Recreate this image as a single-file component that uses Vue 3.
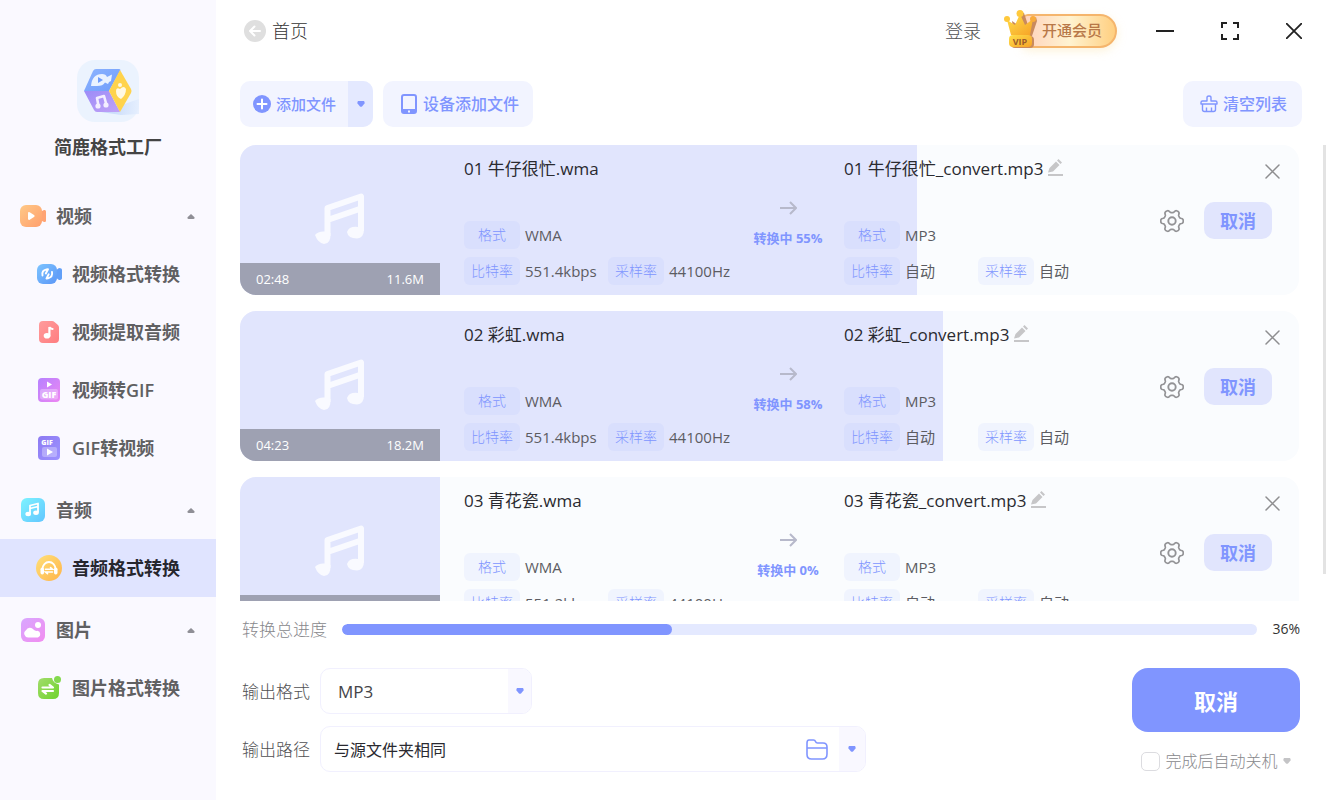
<template>
  <div class="app">
    <aside class="sidebar">
      <div class="brand">
        <svg class="brand-logo" viewBox="0 0 62 62" aria-hidden="true">
          <defs>
            <linearGradient id="cubeTop" x1="0" y1="0" x2="1" y2="1">
              <stop offset="0" stop-color="#8db4ff" />
              <stop offset="1" stop-color="#6f9cfb" />
            </linearGradient>
            <linearGradient id="cubeLeft" x1="0" y1="0" x2="1" y2="1">
              <stop offset="0" stop-color="#9c8cf8" />
              <stop offset="1" stop-color="#c0a2f6" />
            </linearGradient>
            <linearGradient id="cubeShadow" x1="0" y1="0" x2="1" y2="0">
              <stop offset="0" stop-color="#b4cdf8" />
              <stop offset="1" stop-color="#e4eefe" />
            </linearGradient>
          </defs>
          <rect width="62" height="62" rx="18" fill="#ebf3fe" />
          <path d="M24 52L62 39V54L44 55Z" fill="url(#cubeShadow)" opacity=".8" />
          <path d="M19 9H42Q44 9 43 11L32 31H7L16 11Q17 9 19 9Z" fill="url(#cubeTop)" />
          <path d="M7 31H32L43 52H20Q18 52 17 50Z" fill="url(#cubeLeft)" />
          <path d="M43 10L54 29Q55 31 54 33L43 52L32 31Z" fill="#ffd34c" />
          <path d="M14 26Q15 14 25 14Q29 14 30 17L35 14.500L34 21L32 22L31 24L28 22.500Q26 26 20 26H14Z" fill="#eaf2ff" />
          <path d="M21 17L26 20L21 23Z" fill="#6f9cfb" />
          <path d="M21.500 46L20 38L27 36L29.500 45" fill="none" stroke="#f3eeff" stroke-width="2.600" stroke-linejoin="round" />
          <circle cx="21" cy="46" r="2.600" fill="#f3eeff" />
          <circle cx="29" cy="45" r="2.600" fill="#f3eeff" />
          <path d="M39 31Q39 27 43 29Q47 25 49 29Q49 35 44 39Q39 37 39 31Z" fill="#fff8e2" />
          <circle cx="43" cy="25" r="2" fill="#fff8e2" />
        </svg>
        <h1 class="brand-name">简鹿格式工厂</h1>
      </div>

      <nav class="menu">
        <div v-for="group in menu" :key="group.label" class="menu-group">
          <button type="button" class="menu-header" @click="group.open = !group.open">
            <svg class="menu-icon" viewBox="0 0 26 26" aria-hidden="true">
              <template v-if="group.icon === 'video'">
                <path d="M20 9L24 7Q26 6.500 26 8.500V17.500Q26 19.500 24 19L20 17Z" fill="#ffa474" />
                <rect y="2" width="22" height="22" rx="6" fill="url(#gOrange)" />
                <path d="M8 10.500Q8 8.500 9.700 9.300L14 12Q15.500 13 14 14L9.700 16.700Q8 17.500 8 15.500Z" fill="#fff" />
              </template>
              <template v-else-if="group.icon === 'audio'">
                <rect x="1" y="1" width="24" height="24" rx="6" fill="url(#gCyan)" />
                <path d="M10 17V8.500L18 6.500V15.500M10 11.500L18 9.500" fill="none" stroke="#fff" stroke-width="1.800" stroke-linejoin="round" />
                <ellipse cx="8.200" cy="17" rx="2.800" ry="2.200" fill="#fff" />
                <ellipse cx="16" cy="15.800" rx="2.800" ry="2.200" fill="#fff" />
              </template>
              <template v-else>
                <rect x="1" y="1" width="24" height="24" rx="6" fill="url(#gPink)" />
                <circle cx="18" cy="8" r="3" fill="#fff" />
                <path d="M8.500 20.500A4 4 0 0 1 6 13.200A4.500 4.500 0 0 1 13.500 12.500Q15 14.200 17.500 13.800A3.500 3.500 0 0 1 18 20.500Z" fill="#fff" />
              </template>
            </svg>
            <span>{{ group.label }}</span>
            <svg class="menu-caret" :class="{ closed: !group.open }" viewBox="0 0 8 5" aria-hidden="true">
              <path d="M4 0L7.500 3.200Q8 5 6.500 5H1.500Q0 5 .5 3.200Z" fill="#8f8f96" />
            </svg>
          </button>

          <template v-if="group.open">
            <button
              v-for="item in group.items"
              :key="item.label"
              type="button"
              class="menu-item"
              :class="{ active: item.label === current }"
              @click="current = item.label"
            >
              <svg class="menu-icon" viewBox="0 0 26 26" aria-hidden="true">
                <template v-if="item.icon === 'video-convert'">
                  <path d="M19 10L23 7Q26 7 26 9V17Q26 19 23 19L19 16Z" fill="#62a0f8" />
                  <rect x="1" y="3" width="20" height="20" rx="6" fill="url(#gBlue)" />
                  <path d="M6.500 14.500Q5.500 9.500 10.500 8.500L12 8.300L9.800 12.500M16 11Q17 16 12 17.300L10.500 17.500L12.700 13.300" fill="none" stroke="#fff" stroke-width="1.900" stroke-linecap="round" stroke-linejoin="round" />
                </template>
                <template v-else-if="item.icon === 'extract'">
                  <path d="M7 2H16Q17.500 2 18.500 3L22 6Q23 7 23 8.500V20Q23 24 19 24H7Q3 24 3 20V6Q3 2 7 2Z" fill="url(#gRed)" />
                  <ellipse cx="11" cy="16.800" rx="3.300" ry="2.800" fill="#fff" />
                  <path d="M13.400 17V8Q14 9.800 16.500 10" fill="none" stroke="#fff" stroke-width="2.200" stroke-linecap="round" />
                </template>
                <template v-else-if="item.icon === 'to-gif'">
                  <rect x="2" y="1" width="22" height="24" rx="4" fill="url(#gViolet)" />
                  <path d="M11 4.500L16 7.500L11 10.500Z" fill="#fff" />
                  <rect x="4" y="12" width="18" height="10.500" rx="2" fill="#fff" opacity=".3" />
                  <text x="13" y="21" class="gif-text" font-size="9">GIF</text>
                </template>
                <template v-else-if="item.icon === 'from-gif'">
                  <rect x="2" y="1" width="22" height="24" rx="4" fill="url(#gIndigo)" />
                  <text x="11" y="9.500" class="gif-text" font-size="7">GIF</text>
                  <rect x="6" y="12" width="15" height="10" rx="2" fill="#fff" opacity=".3" />
                  <path d="M11 13.500L17 17L11 20.500Z" fill="#fff" />
                </template>
                <template v-else-if="item.icon === 'audio-convert'">
                  <circle cx="13" cy="13" r="13" fill="url(#gYellow)" />
                  <path d="M6.500 14A6.500 7 0 0 1 19.500 14" fill="none" stroke="#fff" stroke-width="1.800" />
                  <rect x="4.500" y="12.500" width="3.500" height="7" rx="1.700" fill="#fff" />
                  <rect x="18" y="12.500" width="3.500" height="7" rx="1.700" fill="#fff" />
                  <path d="M9.500 14.200H16.500L14.500 12.500M16.500 17H9.500L11.500 18.700" fill="none" stroke="#fff" stroke-width="1.600" stroke-linecap="round" />
                </template>
                <template v-else>
                  <path d="M8 3H16Q17 8 23 9.500V18Q23 24 17 24H8Q2 24 2 18V9Q2 3 8 3Z" fill="url(#gGreen)" />
                  <circle cx="21.500" cy="4.500" r="3.500" fill="#83d94e" />
                  <path d="M6.500 12.500H17L13.500 9.800M17 16H6.500L10 18.700" fill="none" stroke="#fff" stroke-width="2.200" stroke-linecap="round" stroke-linejoin="round" />
                </template>
              </svg>
              <span>{{ item.label }}</span>
            </button>
          </template>
        </div>
      </nav>

      <!-- Shared gradients for the menu icons -->
      <svg class="defs" width="0" height="0" aria-hidden="true">
        <defs>
          <linearGradient v-for="g in gradients" :id="g.id" :key="g.id" x1="0" y1="0" x2="1" y2="1">
            <stop offset="0" :stop-color="g.from" />
            <stop offset="1" :stop-color="g.to" />
          </linearGradient>
        </defs>
      </svg>
    </aside>

    <main class="main">
      <header class="titlebar">
        <button type="button" class="back">
          <svg width="22" height="22" viewBox="0 0 22 22" aria-hidden="true">
            <circle cx="11" cy="11" r="11" fill="#dfdfdf" />
            <path d="M16 11H6.500M10.500 6.500L6 11L10.500 15.500" fill="none" stroke="#fff" stroke-width="2" stroke-linecap="round" stroke-linejoin="round" />
          </svg>
          <span>首页</span>
        </button>

        <div class="titlebar-right">
          <button type="button" class="login">登录</button>
          <button type="button" class="vip">
            <svg class="vip-crown" viewBox="0 0 36 40" aria-hidden="true">
              <path d="M8 12L14 16L17 3L20 4L24 16L32 8L33 12L28 27H10Z" fill="#c98a5c" />
              <path d="M3 11L11 16L16 5L21 16L29 10L26 26H7Z" fill="url(#gCrown)" />
              <circle cx="3" cy="10" r="3" fill="#ffc93c" />
              <circle cx="16" cy="4.500" r="3.500" fill="#ffc93c" />
              <circle cx="29" cy="10" r="3" fill="#f8ab3a" />
              <rect x="7" y="27" width="23" height="12" rx="4" fill="#c98a5c" />
              <rect x="5" y="26" width="23" height="12" rx="4" fill="url(#gCrown)" />
              <text x="16" y="35.500" class="vip-text">VIP</text>
            </svg>
            <span class="vip-label">开通会员</span>
          </button>
          <div class="window-controls">
            <button type="button" aria-label="最小化">
              <svg width="18" height="18" viewBox="0 0 18 18"><path d="M0 9H18" stroke="#222" stroke-width="2" /></svg>
            </button>
            <button type="button" aria-label="最大化">
              <svg width="18" height="18" viewBox="0 0 18 18">
                <path d="M1 6V1H6M12 1H17V6M17 12V17H12M6 17H1V12" fill="none" stroke="#222" stroke-width="2" />
              </svg>
            </button>
            <button type="button" aria-label="关闭">
              <svg width="16" height="16" viewBox="0 0 16 16"><path d="M0 0L16 16M16 0L0 16" stroke="#222" stroke-width="1.800" /></svg>
            </button>
          </div>
        </div>
      </header>

      <div class="toolbar">
        <div class="split">
          <button type="button" class="split-main">
            <svg width="18" height="18" viewBox="0 0 18 18" aria-hidden="true">
              <circle cx="9" cy="9" r="9" fill="#8095ff" />
              <path d="M9 4.500V13.500M4.500 9H13.500" stroke="#fff" stroke-width="2" stroke-linecap="round" />
            </svg>
            <span>添加文件</span>
          </button>
          <button type="button" class="split-caret" aria-label="更多添加方式">
            <svg width="8" height="6" viewBox="0 0 8 6"><path d="M1 0H7Q8 1 7.500 2.500L5 5.500Q4 6 3 5.500L.5 2.500Q0 1 1 0Z" fill="#8095ff" /></svg>
          </button>
        </div>
        <button type="button" class="tool">
          <svg width="16" height="20" viewBox="0 0 16 20" aria-hidden="true">
            <path fill-rule="evenodd" d="M3 0H13Q16 0 16 3V17Q16 20 13 20H3Q0 20 0 17V3Q0 0 3 0ZM2 3Q2 2 3 2H13Q14 2 14 3V15H2ZM7 16.500V18.500H9V16.500Z" fill="#8095ff" />
          </svg>
          <span>设备添加文件</span>
        </button>
        <button type="button" class="tool clear">
          <svg width="18" height="18" viewBox="0 0 18 18" aria-hidden="true">
            <path d="M7 6V2.500Q7 1 9 1Q11 1 11 2.500V6H15.500Q17 6 17 7.500V9H1V7.500Q1 6 2.500 6ZM2.500 9.500V14.500Q2.500 16.500 4.500 16.500H13.500Q15.500 16.500 15.500 14.500V9.500M6.500 16V12.500M11.500 16V12.500" fill="none" stroke="#8095ff" stroke-width="1.400" stroke-linejoin="round" />
          </svg>
          <span>清空列表</span>
        </button>
      </div>

      <div class="list-area">
        <ul class="list">
          <li v-for="file in files" :key="file.name" class="card">
            <div class="thumb">
              <svg class="thumb-note" viewBox="0 0 50 52" aria-hidden="true">
                <path d="M12.500 43V15L46 3.500V38M12.500 27L46 15.500" fill="none" stroke="#f9faff" stroke-width="6" stroke-linejoin="round" />
                <path d="M0 42Q3 38 10 38.500L15.500 40Q16 51 9 51Q3 50 0 42ZM32 39Q34 33 43 34L49 36Q49 45 42 45.500Q33 45.500 32 39Z" fill="#f9faff" />
              </svg>
              <div class="thumb-bar">
                <span>{{ file.duration }}</span>
                <span>{{ file.size }}</span>
              </div>
            </div>

            <div class="card-body">
              <div class="card-fill" :style="{ width: file.progress + '%' }"></div>

              <section class="source">
                <h2 class="file-name">{{ file.name }}.wma</h2>
                <dl class="props">
                  <div class="prop wide"><dt>格式</dt><dd>WMA</dd></div>
                  <div class="prop"><dt>比特率</dt><dd>{{ file.bitrate }}</dd></div>
                  <div class="prop"><dt>采样率</dt><dd>44100Hz</dd></div>
                </dl>
              </section>

              <div class="status">
                <svg width="17" height="14" viewBox="0 0 17 14" aria-hidden="true">
                  <path d="M0 7H16M10 1L16 7L10 13" fill="none" stroke="#b7b9cb" stroke-width="2" />
                </svg>
                <span>转换中 {{ Math.floor(file.progress) }}%</span>
              </div>

              <section class="target">
                <h2 class="file-name">
                  {{ file.name }}_convert.mp3
                  <button type="button" class="rename" aria-label="重命名">
                    <svg width="15" height="17" viewBox="0 0 15 17">
                      <path d="M0 13.500L1.500 9L8 2.500L11.500 6L5 12.500ZM9 1.500L10.500 0L14 3.500L12.500 5ZM0 15H15V17H0Z" fill="#c6c6c8" />
                    </svg>
                  </button>
                </h2>
                <dl class="props">
                  <div class="prop wide"><dt>格式</dt><dd>MP3</dd></div>
                  <div class="prop"><dt>比特率</dt><dd>自动</dd></div>
                  <div class="prop"><dt>采样率</dt><dd>自动</dd></div>
                </dl>
              </section>

              <div class="actions">
                <button type="button" class="remove" aria-label="移除">
                  <svg width="15" height="15" viewBox="0 0 15 15"><path d="M1 1L14 14M14 1L1 14" stroke="#8e8e90" stroke-width="1.500" stroke-linecap="round" /></svg>
                </button>
                <div class="actions-row">
                  <button type="button" class="gear" aria-label="设置">
                    <svg width="24" height="24" viewBox="0 0 24 24">
                      <path :d="gearPath" fill="none" stroke="#939396" stroke-width="1.700" stroke-linejoin="round" />
                      <circle cx="12" cy="12" r="3.700" fill="none" stroke="#939396" stroke-width="1.900" />
                    </svg>
                  </button>
                  <button type="button" class="cancel">取消</button>
                </div>
              </div>
            </div>
          </li>
        </ul>
        <div class="scroll-thumb"></div>
      </div>

      <footer class="footer">
        <div class="total">
          <span class="total-label">转换总进度</span>
          <div class="total-track" role="progressbar" :aria-valuenow="total" aria-valuemin="0" aria-valuemax="100">
            <div class="total-fill" :style="{ width: total + '%' }"></div>
          </div>
          <span class="total-value">{{ total }}%</span>
        </div>

        <div class="footer-row">
          <div class="fields">
            <div class="field">
              <label for="format">输出格式</label>
              <div class="box format-box">
                <select id="format" v-model="format">
                  <option>MP3</option>
                  <option>WAV</option>
                  <option>FLAC</option>
                </select>
                <span class="box-caret">
                  <svg width="8" height="6" viewBox="0 0 8 6" aria-hidden="true"><path d="M1 0H7Q8 1 7.500 2.500L5 5.500Q4 6 3 5.500L.5 2.500Q0 1 1 0Z" fill="#8095ff" /></svg>
                </span>
              </div>
            </div>
            <div class="field">
              <label for="path">输出路径</label>
              <div class="box path-box">
                <input id="path" v-model="path" type="text" />
                <button type="button" class="folder" aria-label="打开文件夹">
                  <svg width="22" height="21" viewBox="0 0 22 21">
                    <path d="M1 4Q1 1 3 1H7.500Q9 1 9.500 2.500Q10 4 11.500 4H17Q21 4 21 8V15Q21 20 16.500 20H5.500Q1 20 1 15.500ZM1 9H21" fill="none" stroke="#8095ff" stroke-width="1.600" />
                  </svg>
                </button>
                <button type="button" class="box-caret path-caret" aria-label="选择路径">
                  <svg width="8" height="6" viewBox="0 0 8 6"><path d="M1 0H7Q8 1 7.500 2.500L5 5.500Q4 6 3 5.500L.5 2.500Q0 1 1 0Z" fill="#8095ff" /></svg>
                </button>
              </div>
            </div>
          </div>

          <div class="submit">
            <button type="button" class="cancel-all">取消</button>
            <label class="shutdown">
              <input v-model="shutdown" type="checkbox" />
              <span>完成后自动关机</span>
              <svg width="8" height="6" viewBox="0 0 8 6" aria-hidden="true"><path d="M1 0H7Q8 1 7.500 2.500L5 5.500Q4 6 3 5.500L.5 2.500Q0 1 1 0Z" fill="#c4c4c6" /></svg>
            </label>
          </div>
        </div>
      </footer>
    </main>
  </div>
</template>

<script setup>
import { ref, reactive } from 'vue'

const current = ref('音频格式转换')
const total = ref(36)
const format = ref('MP3')
const path = ref('与源文件夹相同')
const shutdown = ref(false)

const menu = reactive([
  {
    label: '视频',
    icon: 'video',
    open: true,
    items: [
      { label: '视频格式转换', icon: 'video-convert' },
      { label: '视频提取音频', icon: 'extract' },
      { label: '视频转GIF', icon: 'to-gif' },
      { label: 'GIF转视频', icon: 'from-gif' }
    ]
  },
  {
    label: '音频',
    icon: 'audio',
    open: true,
    items: [{ label: '音频格式转换', icon: 'audio-convert' }]
  },
  {
    label: '图片',
    icon: 'image',
    open: true,
    items: [{ label: '图片格式转换', icon: 'image-convert' }]
  }
])

const files = ref([
  { name: '01 牛仔很忙', duration: '02:48', size: '11.6M', bitrate: '551.4kbps', progress: 55.5 },
  { name: '02 彩虹', duration: '04:23', size: '18.2M', bitrate: '551.4kbps', progress: 58.5 },
  { name: '03 青花瓷', duration: '03:59', size: '16.5M', bitrate: '551.2kbps', progress: 0 }
])

const gradients = [
  { id: 'gOrange', from: '#ffc987', to: '#ff9f6d' },
  { id: 'gCyan', from: '#7df3ff', to: '#62c6ff' },
  { id: 'gPink', from: '#d8a8ff', to: '#f28cf0' },
  { id: 'gBlue', from: '#7cc4ff', to: '#5c97f7' },
  { id: 'gRed', from: '#ff9c9c', to: '#ff7d80' },
  { id: 'gViolet', from: '#b682ff', to: '#ee86f2' },
  { id: 'gIndigo', from: '#8d7bf2', to: '#9d92ff' },
  { id: 'gYellow', from: '#ffe07a', to: '#ffb44a' },
  { id: 'gGreen', from: '#a2dc6c', to: '#6fd32c' },
  { id: 'gCrown', from: '#ffdf4a', to: '#f6a226' }
]

// Six rounded teeth around the centre of a 24x24 box
const makeGear = () => {
  const points = []
  for (let i = 0; i < 120; i++) {
    const a = (i * 3 * Math.PI) / 180
    const r = 9.8 + 1.5 * Math.tanh(2 * Math.cos(6 * a))
    points.push(`${(12 + r * Math.cos(a)).toFixed(2)} ${(12 + r * Math.sin(a)).toFixed(2)}`)
  }
  return `M${points.join('L')}Z`
}
const gearPath = makeGear()
</script>

<style>
body {
  margin: 0;
}
</style>

<style scoped>
.app {
  display: flex;
  height: 100vh;
  background-color: #ffffff;
  color: #333333;
  font-family: "Open Sans", "Noto Sans CJK SC", sans-serif;
  font-size: 16px;
}

.app * {
  box-sizing: border-box;
}

svg {
  display: block;
  flex: none;
}

button {
  padding: 0;
  border: none;
  background: none;
  color: inherit;
  font: inherit;
  cursor: pointer;
}

/* Sidebar */
.sidebar {
  flex: none;
  width: 216px;
  background-color: #faf9ff;
}

.brand {
  display: flex;
  flex-direction: column;
  align-items: center;
  padding-top: 60px;
}

.brand-logo {
  width: 62px;
  height: 62px;
}

.brand-name {
  margin: 13px 0 27px;
  color: #444444;
  font-size: 18px;
  font-weight: 600;
  line-height: 25px;
}

.menu-group + .menu-group {
  margin-top: 4px;
}

.menu-header,
.menu-item {
  display: flex;
  align-items: center;
  gap: 10px;
  width: 100%;
  height: 58px;
  padding: 0 21px 0 20px;
  color: #606062;
  font-size: 18px;
  font-weight: 600;
}

.menu-header span,
.menu-item span {
  padding-bottom: 2px;
}

.menu-item {
  padding-left: 36px;
}

.menu-item.active {
  background-color: #e0e4ff;
  color: #26262e;
}

.menu-icon {
  width: 26px;
  height: 26px;
}

.gif-text {
  fill: #ffffff;
  font-weight: 800;
  text-anchor: middle;
}

.menu-caret {
  width: 8px;
  height: 5px;
  margin-left: auto;
}

.menu-caret.closed {
  transform: rotate(180deg);
}

.defs {
  position: absolute;
}

/* Title bar */
.main {
  display: flex;
  flex: 1;
  flex-direction: column;
  min-width: 0;
}

.titlebar {
  display: flex;
  align-items: center;
  justify-content: space-between;
  height: 62px;
  padding: 0 24px 0 28px;
}

.back {
  display: flex;
  align-items: center;
  gap: 6px;
  font-size: 18px;
  font-weight: 300;
}

.back span,
.login {
  padding-bottom: 2px;
}

.titlebar-right {
  display: flex;
  align-items: center;
}

.login {
  margin-right: 23px;
  color: #505052;
  font-size: 18px;
  font-weight: 300;
}

.vip {
  display: flex;
  align-items: center;
  margin-right: 39px;
}

.vip-crown {
  z-index: 1;
  width: 36px;
  height: 40px;
  margin-top: -4px;
  margin-right: -18px;
}

.vip-text {
  fill: #9a5a2a;
  font-size: 9px;
  font-weight: 700;
  text-anchor: middle;
}

.vip-label {
  height: 34px;
  padding: 0 13px 0 18px;
  border: 2px solid #f5b56c;
  border-radius: 6px 17px 17px 6px;
  background: linear-gradient(90deg, #ffd2bc, #fff3d0 50%, #ffcf80);
  box-shadow: 0 3px 10px rgba(250, 220, 150, 0.35);
  color: #b87848;
  font-size: 15px;
  font-weight: 500;
  line-height: 29px;
}

.window-controls {
  display: flex;
  align-items: center;
  gap: 47px;
}

/* Toolbar */
.toolbar {
  display: flex;
  gap: 10px;
  margin-top: 19px;
  padding: 0 24px;
}

.split {
  display: flex;
  height: 46px;
  overflow: hidden;
  border-radius: 10px;
  background-color: #f2f4ff;
}

.split-main,
.tool {
  display: flex;
  align-items: center;
  color: #8095ff;
  font-weight: 500;
}

.split-main span,
.tool span {
  padding-bottom: 2px;
}

.split-main {
  gap: 5px;
  padding: 0 12px 0 13px;
  font-size: 15px;
}

.split-caret {
  display: flex;
  align-items: center;
  justify-content: center;
  width: 25px;
  background-color: #e4e9ff;
}

.tool {
  gap: 6px;
  height: 46px;
  padding: 0 14px 0 18px;
  border-radius: 10px;
  background-color: #f2f4ff;
  font-size: 16px;
}

.clear {
  gap: 5px;
  margin-left: auto;
  padding: 0 15px 0 17px;
}

/* File list */
.list-area {
  display: flex;
  flex: 1;
  gap: 24px;
  min-height: 0;
  margin-top: 18px;
  padding-left: 24px;
}

.list {
  display: flex;
  flex: 1;
  flex-direction: column;
  gap: 16px;
  margin: 0;
  padding: 0;
  overflow-y: auto;
  list-style: none;
  scrollbar-width: none;
}

.scroll-thumb {
  width: 3px;
  height: 94%;
  background-color: #e3e3e3;
}

.card {
  display: flex;
  flex: none;
  height: 150px;
  overflow: hidden;
  border-radius: 16px;
  background-color: #fafcfe;
}

.thumb {
  display: flex;
  flex: none;
  flex-direction: column;
  justify-content: space-between;
  width: 200px;
  background-color: #e1e5fd;
}

.thumb-note {
  width: 50px;
  height: 52px;
  margin: 48px auto 0;
}

.thumb-bar {
  display: flex;
  align-items: center;
  justify-content: space-between;
  height: 32px;
  padding: 0 16px;
  background-color: #9ea1b2;
  color: #ffffff;
  font-size: 13px;
}

.card-body {
  position: relative;
  display: flex;
  flex: 1;
  min-width: 0;
  padding-left: 24px;
}

.card-fill {
  position: absolute;
  top: 0;
  bottom: 0;
  left: 0;
  background-color: #e1e5fd;
}

.source,
.target,
.status,
.actions {
  position: relative;
}

.source {
  width: 268px;
}

.file-name {
  display: flex;
  align-items: center;
  gap: 5px;
  height: 24px;
  margin: 10px 0 42px;
  color: #2a2a30;
  font-size: 17px;
  font-weight: 400;
  white-space: nowrap;
}

.props {
  display: grid;
  grid-template-columns: 134px auto;
  justify-content: start;
  gap: 8px 10px;
  margin: 0;
}

.target .props {
  grid-template-columns: 124px auto;
}

.prop {
  display: flex;
  align-items: center;
  gap: 5px;
}

.prop.wide {
  grid-column: 1 / -1;
}

.prop dt {
  width: 56px;
  height: 28px;
  border-radius: 6px;
  background-color: rgba(128, 149, 255, 0.08);
  color: #8095ff;
  font-size: 14px;
  font-weight: 300;
  line-height: 28px;
  text-align: center;
}

.prop dd {
  margin: 0;
  color: #5c5c62;
  font-size: 15px;
  line-height: 28px;
}

.status {
  display: flex;
  flex-direction: column;
  align-items: center;
  gap: 13px;
  width: 112px;
  padding-top: 56px;
  color: #8095ff;
  font-size: 13px;
  font-weight: 700;
  line-height: 20px;
  white-space: nowrap;
}

.target {
  flex: 1;
}

.actions {
  display: flex;
  flex-direction: column;
  align-items: flex-end;
  padding: 19px 19px 0 0;
}

.actions-row {
  display: flex;
  align-items: center;
  gap: 20px;
  margin-top: 23px;
  padding-right: 8px;
}

.cancel {
  width: 68px;
  height: 37px;
  padding-bottom: 2px;
  border-radius: 10px;
  background-color: #e1e5fd;
  color: #8095ff;
  font-size: 18px;
  font-weight: 600;
}

/* Footer */
.footer {
  padding: 0 26px 28px;
}

.total {
  display: flex;
  align-items: center;
  gap: 15px;
  height: 57px;
}

.total-label {
  padding-bottom: 2px;
  color: #88888c;
  font-size: 17px;
  font-weight: 300;
}

.total-track {
  flex: 1;
  height: 11px;
  overflow: hidden;
  border-radius: 6px;
  background-color: #e4e9ff;
}

.total-fill {
  height: 100%;
  border-radius: 6px;
  background-color: #8095ff;
}

.total-value {
  padding-bottom: 2px;
  font-size: 14px;
}

.footer-row {
  display: flex;
  align-items: flex-start;
  justify-content: space-between;
  gap: 24px;
  margin-top: 10px;
}

.fields {
  display: flex;
  flex: 1;
  flex-direction: column;
  gap: 12px;
}

.field {
  display: flex;
  align-items: center;
  gap: 10px;
}

.field label {
  padding-bottom: 2px;
  color: #505052;
  font-size: 17px;
  font-weight: 300;
}

.box {
  position: relative;
  display: flex;
  align-items: center;
  height: 46px;
  overflow: hidden;
  border: 1px solid #f1f0fe;
  border-radius: 10px;
}

.format-box {
  width: 212px;
}

.path-box {
  flex: 1;
  max-width: 546px;
}

.box select,
.box input {
  flex: 1;
  min-width: 0;
  height: 100%;
  border: none;
  outline: none;
  background: none;
  font-family: inherit;
}

.box select {
  padding: 0 17px;
  appearance: none;
  color: #444448;
  font-size: 17px;
}

.box input {
  padding: 0 13px;
  color: #2a2a30;
  font-size: 16px;
}

.box-caret {
  display: flex;
  align-items: center;
  justify-content: center;
  width: 23px;
  height: 100%;
  background-color: #f9f8ff;
}

.format-box .box-caret {
  position: absolute;
  top: 0;
  right: 0;
  pointer-events: none;
}

.path-caret {
  width: 26px;
}

.folder {
  margin-right: 11px;
}

.submit {
  display: flex;
  flex-direction: column;
  align-items: center;
  gap: 18px;
}

.cancel-all {
  width: 168px;
  height: 64px;
  border-radius: 16px;
  background-color: #8095ff;
  color: #ffffff;
  font-size: 22px;
  font-weight: 700;
}

.shutdown {
  display: flex;
  align-items: center;
  gap: 5px;
  color: #88888c;
  font-size: 16px;
  font-weight: 300;
  line-height: 22px;
}

.shutdown input {
  width: 19px;
  height: 19px;
  margin: 0;
  appearance: none;
  border: 1px solid #dcdce0;
  border-radius: 5px;
  background-color: #ffffff;
}

.shutdown input:checked {
  border-color: #8095ff;
  background-color: #8095ff;
}
</style>
